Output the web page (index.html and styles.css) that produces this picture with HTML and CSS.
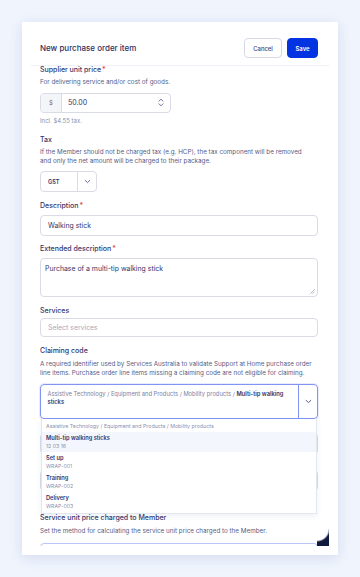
FILE: index.html
```html
<!DOCTYPE html>
<html lang="en">
<head>
<meta charset="utf-8">
<title>New purchase order item</title>
<link rel="stylesheet" href="styles.css">
</head>
<body>
<div class="page">
  <div class="card">
    <header class="head">
      <h1 class="title">New purchase order item</h1>
      <div class="actions">
        <button class="btn btn-secondary" type="button">Cancel</button>
        <button class="btn btn-primary" type="button">Save</button>
      </div>
    </header>
    <div class="body">
      <div class="scroll">
        <section class="field field-first">
          <div class="label">Supplier unit price<span class="req">*</span></div>
          <p class="help">For delivering service and/or cost of goods.</p>
          <div class="money">
            <span class="addon">$</span>
            <span class="money-value">50.00</span>
            <svg class="spin" width="6" height="9" viewBox="0 0 6 9"><path d="M1 3.2 3 1.2 5 3.2M1 5.8 3 7.8 5 5.8" fill="none" stroke="#5c5e86" stroke-width="0.9" stroke-linecap="round" stroke-linejoin="round"/></svg>
          </div>
          <p class="note">Incl. $4.55 tax.</p>
        </section>

        <section class="field field-tax">
          <div class="label">Tax</div>
          <p class="help help-block">If the Member should not be charged tax (e.g. HCP), the tax component will be removed and only the net amount will be charged to their package.</p>
          <div class="select-sm">
            <span class="select-sm-value">GST</span>
            <span class="select-sm-btn"><svg width="7" height="5" viewBox="0 0 7 5"><path d="M1.2 1.4 3.5 3.6 5.8 1.4" fill="none" stroke="#5c5e86" stroke-width="0.9" stroke-linecap="round" stroke-linejoin="round"/></svg></span>
          </div>
        </section>

        <section class="field">
          <div class="label">Description<span class="req">*</span></div>
          <div class="input">Walking stick</div>
        </section>

        <section class="field field-tight">
          <div class="label">Extended description<span class="req">*</span></div>
          <div class="textarea">Purchase of a multi-tip walking stick
            <svg class="grip" width="6" height="6" viewBox="0 0 6 6"><path d="M5.5 1.5 1.5 5.5M5.5 3.8 3.8 5.5" fill="none" stroke="#9496b0" stroke-width="0.7" stroke-linecap="round"/></svg>
          </div>
        </section>

        <section class="field">
          <div class="label">Services</div>
          <div class="input input-multi placeholder">Select services</div>
        </section>

        <section class="field">
          <div class="label">Claiming code</div>
          <p class="help help-block help-wide">A required identifier used by Services Australia to validate Support at Home purchase order line items. Purchase order line items missing a claiming code are not eligible for claiming.</p>
          <div class="combo">
            <div class="combo-box">
              <div class="combo-value"><span class="path">Assistive Technology / Equipment and Products / Mobility products / </span><strong>Multi-tip walking</strong> <strong>sticks</strong></div>
              <span class="combo-btn"><svg width="7" height="5" viewBox="0 0 7 5"><path d="M1.2 1.4 3.5 3.6 5.8 1.4" fill="none" stroke="#4a4c78" stroke-width="0.9" stroke-linecap="round" stroke-linejoin="round"/></svg></span>
            </div>
            <ul class="menu">
              <li class="menu-group">Assistive Technology / Equipment and Products / Mobility products</li>
              <li class="opt opt-active"><span class="opt-name">Multi-tip walking sticks</span><span class="opt-code">12 03 16</span></li>
              <li class="opt"><span class="opt-name">Set up</span><span class="opt-code">WRAP-001</span></li>
              <li class="opt"><span class="opt-name">Training</span><span class="opt-code">WRAP-002</span></li>
              <li class="opt"><span class="opt-name">Delivery</span><span class="opt-code">WRAP-003</span></li>
            </ul>
          </div>
          <div class="hidden-under">
            <div class="input under-input"></div>
            <div class="input under-input"></div>
          </div>
        </section>

        <section class="field field-last">
          <div class="label">Service unit price charged to Member</div>
          <p class="help">Set the method for calculating the service unit price charged to the Member.</p>
          <div class="input input-focus"></div>
        </section>
      </div>
      <div class="corner"></div>
    </div>
  </div>
</div>
</body>
</html>
```

FILE: styles.css
```css
* { box-sizing: border-box; }
html, body { margin: 0; padding: 0; }
body {
  background: #eff4fd;
  font-family: Inter, "Noto Sans", sans-serif;
  color: #34366a;
}
.page {
  width: 360px;
  height: 577px;
  padding: 22px;
}
.card {
  width: 316px;
  height: 533px;
  background: #fff;
  box-shadow: 0 3px 12px rgba(40, 60, 130, 0.13);
  padding: 0 9px 9px;
  display: flex;
  flex-direction: column;
}
.head {
  display: flex;
  align-items: center;
  justify-content: space-between;
  padding: 16px 11px 7px 9px;
  border-bottom: 1px solid #eef0f6;
  flex: none;
}
.title {
  margin: 0;
  font-size: 8px;
  font-weight: 500;
  color: #2e3060;
}
.actions { display: flex; gap: 5px; }
.btn {
  height: 20px;
  border-radius: 4px;
  font-family: inherit;
  font-size: 5.9px;
  font-weight: 500;
  padding: 0;
  cursor: pointer;
}
.btn-secondary {
  width: 38px;
  background: #fff;
  border: 1px solid #d6d8e6;
  color: #3a3c6c;
}
.btn-primary {
  width: 31px;
  background: #0433e2;
  border: 1px solid #0433e2;
  color: #fff;
  font-weight: 600;
}
.body {
  flex: 1;
  position: relative;
  overflow: hidden;
}
.scroll {
  padding: 0 11px 0 9px;
  margin-top: -2px;
}
.field { margin-top: 8px; }
.field-first { margin-top: 0; }
.field-tax { margin-top: 8.5px; }
.field-tight { margin-top: 7.5px; }
.label {
  font-size: 7px;
  font-weight: 500;
  line-height: 11px;
  color: #34366a;
}
.req { color: #e5383b; margin-left: 1px; }
.help {
  margin: 2.5px 0 0;
  max-width: 267px;
  font-size: 6.3px;
  line-height: 9px;
  color: #595b84;
}
.help-block { margin-top: 3.5px; }
.help-wide { max-width: none; }
.note {
  margin: 3.5px 0 0;
  font-size: 6px;
  line-height: 9px;
  color: #8d8fab;
}
.money {
  margin-top: 6px;
  width: 131px;
  height: 20px;
  border: 1px solid #d9dbe7;
  border-radius: 4px;
  display: flex;
  align-items: center;
  overflow: hidden;
}
.addon {
  width: 21px;
  height: 100%;
  background: #f4f5f9;
  border-right: 1px solid #d9dbe7;
  display: flex;
  align-items: center;
  justify-content: center;
  font-size: 6px;
  color: #6b6d90;
}
.money-value {
  flex: 1;
  padding-left: 6px;
  font-size: 7px;
  color: #34366a;
}
.spin { margin-right: 6px; }
.select-sm {
  margin-top: 5px;
  width: 57px;
  height: 21px;
  border: 1px solid #d9dbe7;
  border-radius: 4px;
  display: flex;
  align-items: center;
}
.select-sm-value {
  flex: 1;
  padding-left: 7px;
  font-size: 5.6px;
  font-weight: 600;
  color: #34366a;
}
.select-sm-btn {
  width: 19px;
  height: 100%;
  border-left: 1px solid #d9dbe7;
  display: flex;
  align-items: center;
  justify-content: center;
}
.input {
  margin-top: 3.5px;
  height: 21px;
  border: 1px solid #d9dbe7;
  border-radius: 4px;
  display: flex;
  align-items: center;
  padding-left: 7px;
  font-size: 6.9px;
  color: #34366a;
}
.input-multi { height: 19px; margin-top: 2.5px; }
.placeholder { color: #a7a9c1; }
.textarea {
  position: relative;
  margin-top: 3.5px;
  height: 39px;
  border: 1px solid #d9dbe7;
  border-radius: 4px;
  padding: 5px 4px;
  font-size: 6.9px;
  line-height: 9px;
  color: #34366a;
}
.grip { position: absolute; right: 2px; bottom: 2px; }
.combo { position: relative; margin-top: 6px; z-index: 2; }
.combo-box {
  height: 35px;
  border: 1.5px solid #8194f4;
  border-radius: 4px;
  display: flex;
  box-shadow: 0 0 0 1px rgba(129, 148, 244, 0.18);
}
.combo-value {
  flex: 1;
  padding: 5px 8px 0 6.5px;
  font-size: 5.8px;
  line-height: 8px;
}
.path { color: #7e809f; }
.combo-value strong { color: #34366a; font-weight: 600; }
.combo-btn {
  width: 19px;
  border-left: 1.5px solid #8194f4;
  display: flex;
  align-items: center;
  justify-content: center;
}
.menu {
  position: absolute;
  top: 100%;
  left: 1px;
  right: 1px;
  margin: 0;
  padding: 0 0 1px;
  list-style: none;
  background: #fff;
  border: 1px solid #e4e6ef;
  border-top: none;
  box-shadow: 0 2px 6px rgba(40, 60, 130, 0.08);
}
.menu-group {
  padding: 3px 4px 0;
  height: 13px;
  font-size: 5.3px;
  line-height: 9px;
  color: #8d8fab;
}
.opt {
  display: flex;
  flex-direction: column;
  justify-content: center;
  height: 20px;
  padding: 0 4px;
}
.opt-active { background: #f3f6fd; }
.opt-name {
  font-size: 5.7px;
  font-weight: 600;
  line-height: 8px;
  color: #34366a;
}
.opt-code {
  font-size: 5.2px;
  line-height: 8px;
  color: #8d8fab;
}
.hidden-under { height: 93px; padding-top: 8px; }
.under-input { margin-top: 6px; margin-bottom: 16px; }
.field-last { margin-top: 0; }
.field-last .help { margin-top: 4px; }
.input-focus {
  margin-top: 7px;
  border-color: #bcc6f8;
}
.corner {
  position: absolute;
  right: 0;
  bottom: 0;
  width: 12px;
  height: 17px;
  background: radial-gradient(circle at 0 0, #fff 0, #fff 11px, #c7c9d6 11.6px, #0f1a3c 13px);
}
```
